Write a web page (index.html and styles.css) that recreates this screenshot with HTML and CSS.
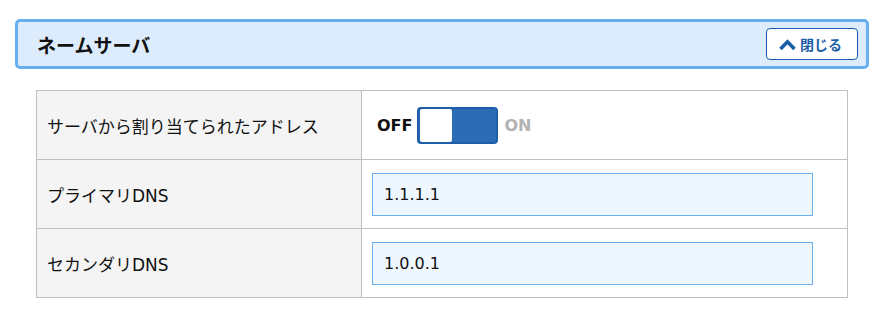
FILE: index.html
```html
<!DOCTYPE html>
<html lang="ja">
<head>
<meta charset="utf-8">
<title>ネームサーバ</title>
<link rel="stylesheet" href="styles.css">
</head>
<body>
<div class="page">
  <div class="panel-head">
    <h2 class="panel-title">ネームサーバ</h2>
    <button class="close-btn" type="button">
      <svg class="chev" viewBox="0 0 17 11" width="17" height="11" aria-hidden="true"><path d="M1.5 10 L8.5 2.8 L15.5 10" fill="none" stroke="#1b5ea8" stroke-width="3.6" stroke-linejoin="miter"/></svg>
      <span>閉じる</span>
    </button>
  </div>
  <table class="settings">
    <tr>
      <th>サーバから割り当てられたアドレス</th>
      <td>
        <div class="toggle-row">
          <span class="lbl-off">OFF</span>
          <span class="toggle"><span class="knob"></span></span>
          <span class="lbl-on">ON</span>
        </div>
      </td>
    </tr>
    <tr>
      <th>プライマリDNS</th>
      <td><input class="field" type="text" value="1.1.1.1"></td>
    </tr>
    <tr>
      <th>セカンダリDNS</th>
      <td><input class="field" type="text" value="1.0.0.1"></td>
    </tr>
  </table>
</div>
</body>
</html>
```
FILE: styles.css
```css
* { box-sizing: border-box; }
body {
  margin: 0;
  background: #fff;
  font-family: "DejaVu Sans", "Noto Sans CJK JP", sans-serif;
  color: #111;
}
.page {
  padding: 19px 14px 0 15px;
}
.panel-head {
  display: flex;
  align-items: center;
  justify-content: space-between;
  height: 50px;
  background: #dcecfc;
  border: 3px solid #66b0f0;
  border-radius: 5px;
  padding: 0 8px 0 19px;
}
.panel-title {
  margin: 0;
  font-family: "Noto Sans CJK JP", sans-serif;
  font-size: 19px;
  font-weight: 700;
  color: #111;
}
.close-btn {
  display: flex;
  align-items: center;
  gap: 4px;
  width: 92px;
  height: 32px;
  padding: 0 0 0 12px;
  background: #fff;
  border: 1px solid #1b5ea8;
  border-radius: 4px;
  font-family: "Noto Sans CJK JP", sans-serif;
  font-size: 14px;
  font-weight: 700;
  color: #1b5ea8;
}
.chev { display: block; }
.settings {
  margin: 21px 21px 0 21px;
  width: calc(100% - 42px);
  border-collapse: collapse;
}
.settings th,
.settings td {
  border: 1px solid #c0c0c0;
  height: 69px;
  padding: 0 0 0 10px;
  font-size: 16px;
}
.settings th {
  width: 325px;
  background: #f4f4f4;
  text-align: left;
  font-weight: 400;
  font-size: 17px;
  font-family: "DejaVu Sans", "Noto Sans CJK JP", sans-serif;
}
.toggle-row {
  display: flex;
  align-items: center;
  gap: 6px;
  padding-left: 5px;
}
.lbl-off, .lbl-on {
  font-weight: 700;
  font-size: 16px;
}
.lbl-off { color: #111; margin-right: -1px; }
.lbl-on { color: #b3b3b3; }
.toggle {
  display: flex;
  align-items: center;
  width: 81px;
  height: 37px;
  background: #2b6cb5;
  border: 2px solid #1d5ea8;
  border-radius: 4px;
  padding: 1px;
}
.knob {
  width: 32px;
  height: 33px;
  background: #fff;
  border-radius: 2px;
}
.field {
  display: block;
  width: 441px;
  height: 43px;
  border: 1px solid #6ab0ee;
  background: #eef6fe;
  padding: 0 11px;
  font-family: "DejaVu Sans", "Noto Sans CJK JP", sans-serif;
  font-size: 16px;
  color: #111;
  outline: none;
}
```
